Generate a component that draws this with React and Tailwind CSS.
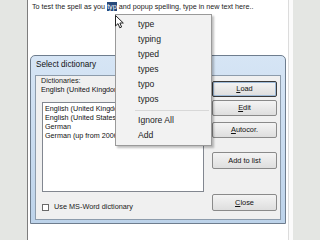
import React from 'react'

const font = { fontFamily: '"Liberation Sans", Arial, sans-serif' }

const suggestions = ['type', 'typing', 'typed', 'types', 'typo', 'typos']
const dictionaries = [
  'English (United Kingdom)',
  'English (United States)',
  'German',
  'German (up from 2006)',
]

function Btn({ children, className = '', isDefault = false }) {
  return (
    <div
      className={`h-[16px] w-[65px] flex items-center justify-center rounded-[2px] bg-gradient-to-b from-[#f4f4f4] to-[#dedede] text-[7.4px] text-[#111] ${
        isDefault ? 'border border-[#3a3a3a] shadow-[inset_0_0_0_1px_#9fbbd8]' : 'border border-[#8a8a8a]'
      } ${className}`}
    >
      {children}
    </div>
  )
}

function Cursor() {
  return (
    <svg width="10" height="14" viewBox="0 0 10 14" className="absolute left-[87px] top-[15px]">
      <path d="M0.5 0.5 L0.5 11 L3 8.6 L4.8 12.8 L6.6 12 L4.9 8 L8.3 8 Z" fill="#fff" stroke="#222" strokeWidth="1" strokeLinejoin="round" />
    </svg>
  )
}

function PopupMenu() {
  return (
    <div className="absolute left-[87px] top-[14px] w-[97px] h-[132px] bg-[#f2f2f2] border border-[#9a9a9a] shadow-[2px_2px_2px_rgba(0,0,0,0.25)] pt-[2px] text-[8.6px] text-[#1c1c1c]">
      {suggestions.map((s) => (
        <div key={s} className="h-[15px] flex items-center pl-[22px]">{s}</div>
      ))}
      <div className="h-[6px] flex items-center pl-[19px] pr-[2px]">
        <div className="h-px w-full bg-[#d8d8d8]" />
      </div>
      <div className="h-[15px] flex items-center pl-[22px]">Ignore All</div>
      <div className="h-[15px] flex items-center pl-[22px]">Add</div>
    </div>
  )
}

function Dialog() {
  return (
    <div className="ml-[2px] mt-[43px] w-[256px] h-[169px] flex flex-col rounded-t-[5px] border border-[#6e7d8e] bg-gradient-to-b from-[#d6e5f5] to-[#bdd3ea]">
      <div className="h-[19px] flex items-center pl-[5px] text-[8.2px] text-[#111]">Select dictionary</div>
      <div className="flex-1 mx-[4px] mb-[3px] border border-[#8d9cac] bg-[#f0f0f0] flex">
        <div className="w-[171px] flex flex-col pl-[5px]">
          <div className="mt-[1px] h-[8px] leading-[8px] text-[7.2px] text-[#222]">Dictionaries:</div>
          <div className="mt-[1px] h-[8px] leading-[8px] text-[7.2px] text-[#111]">English (United Kingdom</div>
          <div className="mt-[8px] ml-[1px] w-[162px] h-[90px] bg-white border border-[#828790] pt-[1px] pl-[2px]">
            {dictionaries.map((d) => (
              <div key={d} className="h-[9px] leading-[9px] text-[7.2px] text-[#111] whitespace-nowrap">{d}</div>
            ))}
          </div>
          <div className="mt-[10px] ml-[1px] flex items-center gap-[5px]">
            <div className="w-[7px] h-[7px] bg-white border border-[#6a6a6a]" />
            <span className="text-[7.3px] text-[#222]">Use MS-Word dictionary</span>
          </div>
        </div>
        <div className="ml-[5px] flex flex-col">
          <Btn isDefault className="mt-[5px]"><span><span className="underline">L</span>oad</span></Btn>
          <Btn className="mt-[3px]"><span><span className="underline">E</span>dit</span></Btn>
          <Btn className="mt-[6px]"><span><span className="underline">A</span>utocor.</span></Btn>
          <Btn className="mt-[14px] h-[17px]">Add to list</Btn>
          <Btn className="mt-[25px] h-[17px]"><span><span className="underline">C</span>lose</span></Btn>
        </div>
      </div>
    </div>
  )
}

export default function App() {
  return (
    <div className="w-[320px] h-[240px] overflow-hidden flex bg-[#e4e6e3]" style={font}>
      <div className="w-[27px]" />
      <div className="w-px bg-[#7d7d7d]" />
      <div className="relative w-[260px] bg-white flex flex-col">
        <div className="pl-[4px] pt-[2px] h-[12px] leading-[10px] text-[7.2px] text-[#1a1a1a] whitespace-nowrap">
          To test the spell as you <span className="bg-[#27497a] text-white">typ</span> and popup spelling, type in new text here..
        </div>
        <Dialog />
        <PopupMenu />
        <Cursor />
      </div>
      <div className="w-px bg-[#dcdcdc]" />
      <div className="w-[4px] bg-[#fbfbfb]" />
      <div className="flex-1" />
    </div>
  )
}
